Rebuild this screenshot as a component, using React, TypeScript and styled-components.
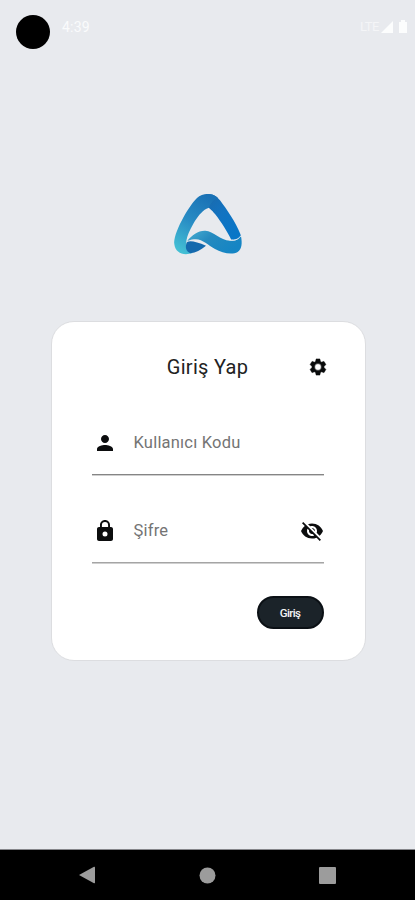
import React from 'react';
import styled, { createGlobalStyle } from 'styled-components';
import { MdPerson, MdVisibilityOff } from 'react-icons/md';

const GlobalStyle = createGlobalStyle`
  * { box-sizing: border-box; }
  body { margin: 0; background: #e8eaee; font-family: Roboto, sans-serif; }
`;

const Screen = styled.div`
  display: flex;
  flex-direction: column;
  align-items: center;
  width: 415px;
  height: 900px;
  overflow: hidden;
  background: #e8eaee;
`;

const StatusBar = styled.header`
  display: flex;
  align-items: flex-start;
  width: 100%;
  height: 180px;
  padding: 15px 7px 0 16px;
  color: #fafbfc;
`;

const Camera = styled.div`
  width: 34px;
  height: 34px;
  border-radius: 50%;
  background: #000;
`;

const Clock = styled.time`
  margin: 4px auto 0 12px;
  font-size: 14px;
  line-height: 17px;
  letter-spacing: 0.2px;
`;

const Signals = styled.div`
  display: flex;
  align-items: center;
  height: 15px;
  margin-top: 4px;
`;

const Network = styled.span`
  font-size: 13px;
  letter-spacing: -0.5px;
  color: #f4f5f7;
`;

const LogoArt = styled.svg`
  flex: none;
  width: 95px;
  height: 90px;
`;

const Card = styled.main`
  flex: none;
  display: flex;
  flex-direction: column;
  width: 315px;
  height: 340px;
  margin: 51px 0 0 1px;
  padding: 32px 41px 0 40px;
  border: 1px solid #dcdde0;
  border-radius: 23px;
  background: #fff;
`;

const TitleRow = styled.div`
  display: grid;
  grid-template-columns: 1fr auto 1fr;
  align-items: center;
  height: 26px;
  margin-right: -4px;
  margin-bottom: 45px;
`;

const Title = styled.h1`
  grid-column: 2;
  margin: 0 4px 0 0;
  font-size: 20px;
  font-weight: 400;
  letter-spacing: 0.3px;
  line-height: 26px;
  color: #222;
`;

const SettingsButton = styled.button`
  display: flex;
  justify-self: end;
  padding: 0;
  border: 0;
  background: none;
`;

const Field = styled.label<{ $line: string }>`
  display: flex;
  align-items: center;
  height: 50px;
  margin-bottom: 38px;
  padding: 2px 0 16px 1px;
  border-bottom: 1px solid ${({ $line }) => $line};
  box-shadow: 0 1px 0 #cfcfcf;
  color: #0c0d0e;

  svg { flex: none; }
`;

const FieldText = styled.span`
  flex: 1;
  margin: 0 0 0 17px;
  font-size: 16.5px;
  line-height: 20px;
  letter-spacing: 0.2px;
  color: #747474;
`;

const SubmitButton = styled.button`
  align-self: flex-end;
  width: 67px;
  height: 33px;
  margin-top: -5px;
  padding: 0;
  border: 2px solid #0b1015;
  border-radius: 17px;
  background: #1b2329;
  color: #f4f5f6;
  font: 500 11.5px/28px Roboto, sans-serif;
  letter-spacing: -0.65px;
`;

const NavBar = styled.nav`
  flex: none;
  display: flex;
  justify-content: space-between;
  align-items: center;
  width: 100%;
  height: 51px;
  margin-top: auto;
  padding: 0 79px;
  border-top: 1px solid #85868a;
  background: #000;
`;

function Logo() {
  return (
    <LogoArt viewBox="0 0 285 270" aria-label="Logo">
      <defs>
        <linearGradient id="left" x1="0.7" y1="0" x2="0.25" y2="1">
          <stop offset="0" stopColor="#1971b5" />
          <stop offset="0.5" stopColor="#288cc4" />
          <stop offset="1" stopColor="#43bfd4" />
        </linearGradient>
        <linearGradient id="right" x1="0" y1="0" x2="0.7" y2="1">
          <stop offset="0" stopColor="#1c69a9" />
          <stop offset="0.5" stopColor="#1273c1" />
          <stop offset="1" stopColor="#0876c7" />
        </linearGradient>
        <linearGradient id="wave" x1="0" y1="0" x2="1" y2="0.5">
          <stop offset="0" stopColor="#48afd2" />
          <stop offset="0.45" stopColor="#258abf" />
          <stop offset="1" stopColor="#1585c4" />
        </linearGradient>
      </defs>
      <path fill="url(#right)" d="M137 43C157 38 171 49 180 61C201 89 227 127 241 162C246 174 240 180 214 180C204 158 184 126 165 102C154 88 144 79 136 82Z" />
      <path fill="url(#left)" d="M43 193C38 164 82 83 111 54C128 37 160 39 174 54C161 57 153 69 145 84C116 92 86 155 81 174C76 190 79 207 98 219C70 228 46 219 43 193Z" />
      <path fill="#1469ad" d="M79 191C82 178 107 185 138 197C121 210 108 218 91 220C80 214 75 205 79 191Z" />
      <path fill="url(#wave)" d="M82 182C96 165 115 151 136 152C161 154 180 180 210 182C226 184 237 178 243 169C247 189 246 208 233 216C215 226 185 218 165 207C143 195 125 174 102 178C91 179 86 183 82 182Z" />
      <path fill="none" stroke="#e8edf2" strokeWidth="3" d="M170 159C188 174 205 181 221 180C231 180 238 174 243 167" />
    </LogoArt>
  );
}

function GearIcon() {
  return (
    <svg width="20" height="20" viewBox="0 0 24 24" fill="#090a0b" aria-hidden="true">
      <path stroke="#090a0b" strokeWidth="0.7" fillRule="evenodd" d="M19.14 12.94c.04-.3.06-.61.06-.94 0-.32-.02-.64-.07-.94l2.03-1.58c.18-.14.23-.41.12-.61l-1.92-3.32c-.12-.22-.37-.29-.59-.22l-2.39.96c-.5-.38-1.03-.7-1.62-.94l-.36-2.54c-.04-.24-.24-.41-.48-.41h-3.84c-.24 0-.43.17-.47.41l-.36 2.54c-.59.24-1.13.57-1.62.94l-2.39-.96c-.22-.08-.47 0-.59.22L2.74 8.87c-.12.21-.08.47.12.61l2.03 1.58c-.05.3-.09.63-.09.94s.02.64.07.94l-2.03 1.58c-.18.14-.23.41-.12.61l1.92 3.32c.12.22.37.29.59.22l2.39-.96c.5.38 1.03.7 1.62.94l.36 2.54c.05.24.24.41.48.41h3.84c.24 0 .44-.17.47-.41l.36-2.54c.59-.24 1.13-.56 1.62-.94l2.39.96c.22.08.47 0 .59-.22l1.92-3.32c.12-.22.07-.47-.12-.61l-2.01-1.58zM12 16.1a4.1 4.1 0 1 1 0-8.2 4.1 4.1 0 0 1 0 8.2z" />
    </svg>
  );
}

function LockIcon() {
  return (
    <svg width="24" height="24" viewBox="0 0 24 24" fill="#0c0d0e" aria-hidden="true">
      <path fillRule="evenodd" d="M18 8h-1V6c0-2.76-2.24-5-5-5S7 3.240 7 6v2H6c-1.100 0-2 .9-2 2v10c0 1.100.9 2 2 2h12c1.100 0 2-.9 2-2V10c0-1.100-.9-2-2-2zM12 17.500a2.500 2.500 0 1 1 0-5 2.500 2.500 0 0 1 0 5zM15.100 8H8.900V6a3.100 3.100 0 0 1 6.200 0v2z" />
    </svg>
  );
}

export default function App() {
  return (
    <>
      <GlobalStyle />
      <Screen>
        <StatusBar>
          <Camera />
          <Clock>4:39</Clock>
          <Signals>
            <Network>LTE</Network>
            <svg width="29" height="15" viewBox="0 0 29 15" fill="#fcfdfd" aria-hidden="true">
              <path d="M2 14L14 2V14Z" />
              <path d="M20 3H22V1H26V3H28V14H20Z" />
            </svg>
          </Signals>
        </StatusBar>
        <Logo />
        <Card>
          <TitleRow>
            <Title>Giriş Yap</Title>
            <SettingsButton aria-label="Ayarlar"><GearIcon /></SettingsButton>
          </TitleRow>
          <Field $line="#858585">
            <MdPerson size={24} />
            <FieldText>Kullanıcı Kodu</FieldText>
          </Field>
          <Field $line="#a5a5a5">
            <LockIcon />
            <FieldText>Şifre</FieldText>
            <MdVisibilityOff size={24} />
          </Field>
          <SubmitButton>Giriş</SubmitButton>
        </Card>
        <NavBar>
          <svg width="17" height="18" viewBox="0 0 17 18" fill="#9c9c9c"><path d="M0 9L15 .8Q16 .4 16 1.5V16.5Q16 17.6 15 17.2Z" /></svg>
          <svg width="17" height="17" viewBox="0 0 17 17" fill="#9c9c9c"><circle cx="8.5" cy="8.5" r="8" /></svg>
          <svg width="17" height="17" viewBox="0 0 17 17" fill="#9c9c9c"><rect width="17" height="17" rx="1" /></svg>
        </NavBar>
      </Screen>
    </>
  );
}
